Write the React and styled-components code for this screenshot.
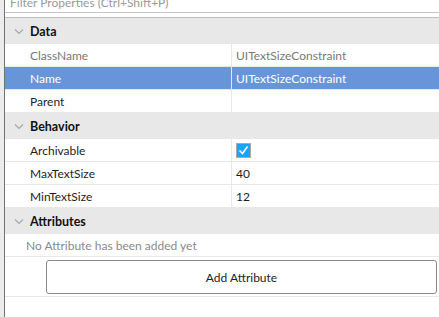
import React from "react";
import styled, { createGlobalStyle } from "styled-components";

const Global = createGlobalStyle`
  body {
    margin: 0;
    background: #fff;
    font-family: "Lato", "Noto Sans", sans-serif;
    font-size: 12px;
    color: #1e1e1e;
  }
`;

const Page = styled.div`
  display: flex;
  height: 317px;
  overflow: hidden;
`;

const Gutter = styled.div`
  width: 4px;
  background: #ececec;
  border-right: 1px solid #727272;
`;

const Panel = styled.div`
  flex: 1;
  display: flex;
  flex-direction: column;
  min-width: 0;
`;

const Filter = styled.div`
  height: 12px;
  overflow: hidden;
  border-bottom: 1px solid #c6c6c6;
  margin-bottom: 4px;
  padding-left: 5px;
  color: #9a9a9a;
  line-height: 14px;
  span {
    display: block;
    margin-top: -4px;
  }
`;

const List = styled.div`
  border-top: 1px solid #bdbdbd;
`;

const Header = styled.div`
  display: flex;
  align-items: center;
  height: 26px;
  background: #e8e8e8;
  font-weight: 700;
  font-size: 12.5px;
  color: #111;
  gap: 5px;
  padding-left: 8px;
`;

const Row = styled.div`
  display: grid;
  grid-template-columns: 226px 1fr;
  height: 22px;
  border-bottom: 1px solid #e8e8e8;
  background: ${(p) => (p.selected ? "#6895d9" : "#fff")};
  color: ${(p) => (p.selected ? "#fff" : p.muted ? "#787878" : "#1e1e1e")};
`;

const Key = styled.div`
  display: flex;
  align-items: center;
  padding-left: 25px;
`;

const Value = styled.div`
  display: flex;
  align-items: center;
  padding-left: 4px;
  border-left: 1px solid #e8e8e8;
`;

const Check = styled.div`
  width: 13px;
  height: 13px;
  background: #1aa3ff;
  border: 1px solid #a9a9a9;
  display: flex;
  align-items: center;
  justify-content: center;
`;

const Note = styled.div`
  height: 22px;
  display: flex;
  align-items: center;
  padding-left: 21px;
  color: #8a8a8a;
  border-bottom: 1px solid #e8e8e8;
`;

const ButtonBar = styled.div`
  padding: 3px 2px 2px 41px;
  border-bottom: 1px solid #e8e8e8;
`;

const Button = styled.button`
  width: 100%;
  height: 34px;
  background: #fff;
  border: 1px solid #8a8a8a;
  border-radius: 3px;
  font: inherit;
  color: #1e1e1e;
  cursor: pointer;
`;

const Chevron = () => (
  <svg width="12" height="12" viewBox="0 0 12 12">
    <path d="M2 4.5l4 4 4-4" fill="none" stroke="#a8a8a8" strokeWidth="1.2" />
  </svg>
);

const sections = [
  {
    title: "Data",
    rows: [
      { key: "ClassName", value: "UITextSizeConstraint", muted: true },
      { key: "Name", value: "UITextSizeConstraint", selected: true },
      { key: "Parent", value: "" },
    ],
  },
  {
    title: "Behavior",
    rows: [
      { key: "Archivable", check: true },
      { key: "MaxTextSize", value: "40" },
      { key: "MinTextSize", value: "12" },
    ],
  },
];

export default function App() {
  return (
    <Page>
      <Global />
      <Gutter />
      <Panel>
        <Filter>
          <span>Filter Properties (Ctrl+Shift+P)</span>
        </Filter>
        <List>
          {sections.map((s) => (
            <React.Fragment key={s.title}>
              <Header>
                <Chevron />
                {s.title}
              </Header>
              {s.rows.map((r) => (
                <Row key={r.key} selected={r.selected} muted={r.muted}>
                  <Key>{r.key}</Key>
                  <Value>
                    {r.check ? (
                      <Check>
                        <svg width="11" height="11" viewBox="0 0 11 11">
                          <path d="M1.5 5.5l3 3 5-7" fill="none" stroke="#fff" strokeWidth="1.6" />
                        </svg>
                      </Check>
                    ) : (
                      r.value
                    )}
                  </Value>
                </Row>
              ))}
            </React.Fragment>
          ))}
          <Header>
            <Chevron />
            Attributes
          </Header>
          <Note>No Attribute has been added yet</Note>
          <ButtonBar>
            <Button>Add Attribute</Button>
          </ButtonBar>
        </List>
      </Panel>
    </Page>
  );
}
